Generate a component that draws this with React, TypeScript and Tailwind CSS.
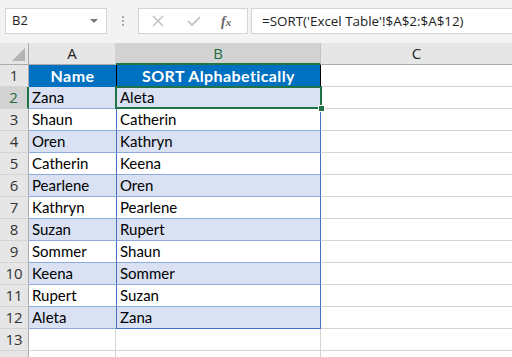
import React from 'react';

const names = ['Zana', 'Shaun', 'Oren', 'Catherin', 'Pearlene', 'Kathryn', 'Suzan', 'Sommer', 'Keena', 'Rupert', 'Aleta'];
const sorted = [...names].sort();

const cellFont = { fontFamily: 'Lato, "Liberation Sans", sans-serif' };
const uiFont = { fontFamily: '"Open Sans", "Liberation Sans", sans-serif' };

function RowHead({ n, active }: { n?: number; active?: boolean }) {
  return (
    <div
      className={`h-[22px] flex items-center justify-center text-[15px] border-b border-[#d4d4d4] ${
        active ? 'bg-[#d2d2d2] text-[#1e6b41] border-r-2 border-r-[#217346]' : 'bg-[#e6e6e6] text-[#333] border-r border-r-[#ababab]'
      }`}
      style={uiFont}
    >
      {n}
    </div>
  );
}

export default function App() {
  return (
    <div className="w-[512px] h-[357px] bg-white overflow-hidden select-none" style={cellFont}>
      {/* formula bar */}
      <div className="h-[43px] bg-[#f3f3f3] flex items-start pt-[8px] pl-[5px]">
        <div className="w-[102px] h-[26px] bg-white border border-[#d4d4d4] flex items-center justify-between pl-[6px] pr-[8px] text-[13px] text-[#222]" style={uiFont}>
          <span>B2</span>
          <span className="w-0 h-0 border-l-[4px] border-r-[4px] border-t-[4px] border-l-transparent border-r-transparent border-t-[#777]" />
        </div>
        <div className="w-[31px] h-[26px] flex flex-col items-center justify-center gap-[2px]">
          <span className="w-[2px] h-[2px] bg-[#aaa]" />
          <span className="w-[2px] h-[2px] bg-[#aaa]" />
          <span className="w-[2px] h-[2px] bg-[#aaa]" />
        </div>
        <div className="w-[110px] h-[26px] bg-white border border-[#d4d4d4] flex items-center pl-[13px]">
          <svg width="12" height="12" viewBox="0 0 12 12"><path d="M1 1 L11 11 M11 1 L1 11" stroke="#bdbdbd" strokeWidth="1.4" /></svg>
          <svg className="ml-[23px]" width="14" height="12" viewBox="0 0 14 12"><path d="M1 6 L5 10 L13 2" stroke="#bdbdbd" strokeWidth="1.6" fill="none" /></svg>
          <span className="ml-[20px] text-[14px] italic text-[#666] font-semibold" style={{ fontFamily: '"Liberation Serif", serif' }}>f<span className="text-[11px]">x</span></span>
        </div>
        <div className="ml-[3px] flex-1 h-[26px] bg-white border border-[#d4d4d4] border-r-0 flex items-center pl-[10px] text-[13.4px] text-[#222]" style={uiFont}>
          =SORT('Excel Table'!$A$2:$A$12)
        </div>
      </div>

      {/* grid */}
      <div className="relative grid grid-cols-[29px_87px_205px_1fr]">
        {/* column headers */}
        <div className="h-[22px] bg-[#e6e6e6] border-r border-b border-[#ababab] relative">
          <svg className="absolute right-[3px] bottom-[3px]" width="13" height="13" viewBox="0 0 13 13"><path d="M13 0 L13 13 L0 13 Z" fill="#b4b4b4" /></svg>
        </div>
        <div className="h-[22px] bg-[#e6e6e6] border-r border-[#d4d4d4] border-b border-b-[#ababab] flex items-center justify-center text-[15px] text-[#222]" style={uiFont}>A</div>
        <div className="h-[22px] bg-[#d2d2d2] border-r border-[#c4c4c4] border-b-2 border-b-[#217346] flex items-center justify-center text-[15px] text-[#1e6b41]" style={uiFont}>B</div>
        <div className="h-[22px] bg-[#e6e6e6] border-b border-[#ababab] flex items-center justify-center text-[15px] text-[#222]" style={uiFont}>C</div>

        {/* row 1 */}
        <RowHead n={1} />
        <div className="h-[22px] bg-[#0070c0] border-b border-[#0070c0] flex items-center justify-center text-[16px] font-bold tracking-[0.4px] text-white">Name</div>
        <div className="h-[22px] bg-[#0070c0] border-x border-black border-b border-b-[#0070c0] flex items-center justify-center text-[16px] font-bold tracking-[0.4px] text-white">SORT Alphabetically</div>
        <div className="h-[22px] border-b border-[#d4d4d4]" />

        {names.map((n, i) => {
          const row = i + 2;
          const band = i % 2 === 0;
          const last = i === names.length - 1;
          return (
            <React.Fragment key={row}>
              <RowHead n={row} active={row === 2} />
              <div className={`h-[22px] flex items-center pl-[3px] text-[15px] text-black border-b border-[#8ea9db] ${band ? 'bg-[#d9e1f2]' : 'bg-white'}`}>{n}</div>
              <div className={`h-[22px] flex items-center pl-[3px] text-[15px] text-black border-x border-x-[#4472c4] border-b ${last ? 'border-b-[#4472c4]' : 'border-b-[#8ea9db]'} ${band ? 'bg-[#d9e1f2]' : 'bg-white'}`}>{sorted[i]}</div>
              <div className="h-[22px] border-b border-[#d4d4d4]" />
            </React.Fragment>
          );
        })}

        {/* row 13 */}
        <RowHead n={13} />
        <div className="h-[22px] border-r border-b border-[#d4d4d4]" />
        <div className="h-[22px] border-r border-b border-[#d4d4d4]" />
        <div className="h-[22px] border-b border-[#d4d4d4]" />
        <RowHead />
        <div className="h-[22px] border-r border-[#d4d4d4]" />
        <div className="h-[22px] border-r border-[#d4d4d4]" />
        <div className="h-[22px]" />

        {/* selection on B2 */}
        <div className="absolute left-[115px] top-[43px] w-[207px] h-[23px] border-2 border-[#217346] pointer-events-none" />
        <div className="absolute left-[318px] top-[62px] w-[7px] h-[7px] bg-[#217346] border border-white pointer-events-none" />
      </div>
    </div>
  );
}
